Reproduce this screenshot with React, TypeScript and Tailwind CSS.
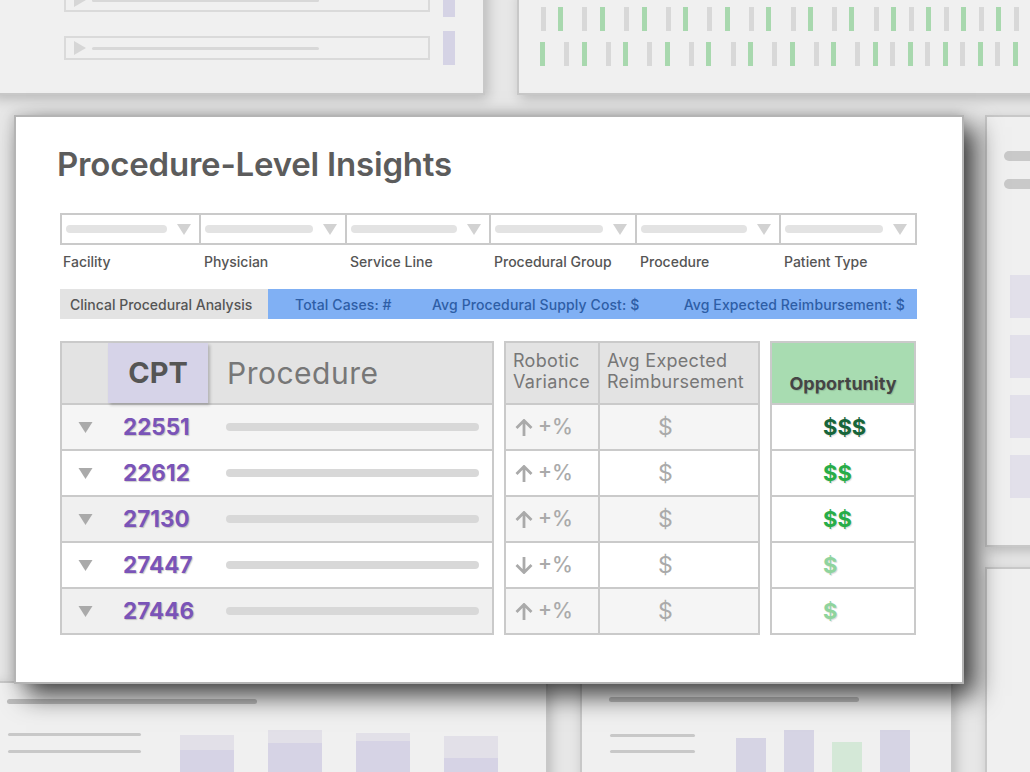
import { FC } from 'react';

const font = 'font-[family-name:Inter,"Liberation_Sans",sans-serif]';

const Caret: FC<{ className: string }> = ({ className }) => (
  <svg viewBox="0 0 14 11" className={className}>
    <path d="M0 0H14L7 11Z" fill="currentColor" />
  </svg>
);

const Arrow: FC<{ down?: boolean }> = ({ down }) => (
  <svg
    viewBox="0 0 18 17"
    className={`h-[17px] w-[18px] text-[#aaaaaa] ${down ? 'rotate-180' : ''}`}
  >
    <path
      d="M1.5 9 9 1.5 16.5 9M9 2v15"
      fill="none"
      stroke="currentColor"
      strokeWidth="2.8"
    />
  </svg>
);

const filters = [
  'Facility',
  'Physician',
  'Service Line',
  'Procedural Group',
  'Procedure',
  'Patient Type',
];

const rows = [
  { cpt: '22551', up: true, opp: '$$$', oppColor: 'text-[#17653a]', bg: 'bg-[#f5f5f5]' },
  { cpt: '22612', up: true, opp: '$$', oppColor: 'text-[#28ad48]', bg: 'bg-white' },
  { cpt: '27130', up: true, opp: '$$', oppColor: 'text-[#28ad48]', bg: 'bg-[#f0f0f0]' },
  { cpt: '27447', up: false, opp: '$', oppColor: 'text-[#8fd49d]', bg: 'bg-white' },
  { cpt: '27446', up: true, opp: '$', oppColor: 'text-[#8fd49d]', bg: 'bg-[#f0f0f0]' },
];

const ticksTop = [
  [541, 0], [558, 1], [582, 0], [600, 1], [624, 0], [642, 1], [666, 0], [683, 1],
  [707, 0], [725, 1], [749, 0], [766, 1], [791, 0], [808, 1], [832, 0], [849, 1],
  [874, 0], [891, 1], [909, 0], [926, 1], [944, 0], [961, 1], [979, 0], [996, 1], [1014, 0],
];
const ticksBottom = [
  [540, 1], [564, 0], [582, 1], [606, 0], [623, 1], [647, 0], [665, 1], [689, 0],
  [706, 1], [731, 0], [748, 1], [772, 0], [790, 1], [814, 0], [831, 1], [855, 0],
  [873, 1], [890, 0], [908, 1], [925, 0], [943, 1], [960, 0], [978, 1], [995, 0], [1013, 1],
];

// filter column widths measured off the mock (first and last absorb the outer border)
const filterCols = 'grid-cols-[137px_146px_144px_146px_144px_1fr]';

const ghostCard =
  'absolute border-2 border-[#c8c8c8] bg-[#f0f0f0] shadow-[3px_4px_12px_rgba(0,0,0,0.2)]';

const BackgroundCards: FC = () => (
  <>
    {/* top left list window */}
    <div className={`${ghostCard} left-[-10px] top-[-44px] h-[139px] w-[495px]`}>
      <div className="flex flex-col gap-[14px] pl-[72px] pt-[25px]">
        {[0, 1].map((i) => (
          <div key={i} className="flex items-center">
            <div className="flex h-[24px] w-[366px] items-center border-2 border-[#dadada] pl-[8px]">
              <svg viewBox="0 0 12 14" className="h-[14px] w-[12px]">
                <path d="M0 0 12 7 0 14Z" fill="#d6d6d6" />
              </svg>
              <div className="ml-[6px] h-[3px] w-[227px] rounded-full bg-[#d8d8d8]" />
            </div>
            <div className="ml-[13px] h-[34px] w-[12px] bg-[#d5d3e5]" />
          </div>
        ))}
      </div>
    </div>

    {/* top right tick window */}
    <div className={`${ghostCard} left-[517px] top-[-10px] h-[105px] w-[540px]`}>
      <div className="pl-[21px] pt-[15px]">
        <svg width="500" height="60" viewBox="0 0 500 60">
          {ticksTop.map(([x, g]) => (
            <rect key={`t${x}`} x={x - 540} y={0} width={5} height={24} fill={g ? '#a8d8ae' : '#d8d8d8'} />
          ))}
          {ticksBottom.map(([x, g]) => (
            <rect key={`b${x}`} x={x - 540} y={35} width={5} height={24} fill={g ? '#a8d8ae' : '#d8d8d8'} />
          ))}
        </svg>
      </div>
    </div>

    {/* right window */}
    <div className={`${ghostCard} left-[985px] top-[115px] h-[432px] w-[80px]`}>
      <div className="flex flex-col gap-[18px] pl-[17px] pt-[34px]">
        <div className="h-[10px] w-[60px] rounded-full bg-[#c9c9c9]" />
        <div className="h-[10px] w-[60px] rounded-full bg-[#c9c9c9]" />
      </div>
      <div className="mt-[86px] flex flex-col gap-[17px] pl-[23px]">
        {[0, 1, 2, 3].map((i) => (
          <div key={i} className="h-[43px] w-[60px] bg-[#e2e0ea]" />
        ))}
      </div>
    </div>
    <div className={`${ghostCard} left-[985px] top-[567px] h-[300px] w-[80px]`} />

    {/* bottom left chart window */}
    <div className={`${ghostCard} left-[-10px] top-[681px] h-[150px] w-[558px]`}>
      <div className="ml-[15px] mt-[16px] h-[5px] w-[250px] rounded-full bg-[#bdbdbd]" />
      <div className="mt-[21px] flex h-[75px] items-end pl-[16px]">
        <div className="flex flex-col gap-[14px] self-start pt-[8px]">
          <div className="h-[3px] w-[133px] rounded-full bg-[#c8c8c8]" />
          <div className="h-[3px] w-[133px] rounded-full bg-[#c8c8c8]" />
        </div>
        <div className="ml-[39px] flex items-end gap-[34px]">
          {[
            [15, 50],
            [13, 57],
            [8, 59],
            [22, 42],
          ].map(([light, dark], i) => (
            <div key={i} className="flex w-[54px] flex-col">
              <div className="bg-[#e2e0e8]" style={{ height: light }} />
              <div className="bg-[#d6d3e5]" style={{ height: dark }} />
            </div>
          ))}
        </div>
      </div>
    </div>

    {/* bottom middle chart window */}
    <div className={`${ghostCard} left-[580px] top-[681px] h-[150px] w-[373px]`}>
      <div className="ml-[27px] mt-[14px] h-[5px] w-[250px] rounded-full bg-[#bdbdbd]" />
      <div className="mt-[24px] flex h-[75px] items-end pl-[28px]">
        <div className="flex flex-col gap-[13px] self-start pt-[8px]">
          <div className="h-[3px] w-[85px] rounded-full bg-[#c8c8c8]" />
          <div className="h-[3px] w-[85px] rounded-full bg-[#c8c8c8]" />
        </div>
        <div className="ml-[41px] flex items-end gap-[18px]">
          <div className="h-[63px] w-[30px] bg-[#d6d4e4]" />
          <div className="h-[71px] w-[30px] bg-[#d6d4e4]" />
          <div className="h-[59px] w-[30px] bg-[#d4e8d7]" />
          <div className="h-[71px] w-[30px] bg-[#d6d4e4]" />
        </div>
      </div>
    </div>
  </>
);

const InsightsCard: FC = () => (
  <div className="absolute left-[14px] top-[115px] h-[569px] w-[950px] border-2 border-[#b4b4b4] bg-white pl-[44px] pt-[28px] shadow-[12px_12px_24px_rgba(0,0,0,0.72),-2px_-2px_10px_rgba(0,0,0,0.12)]">
    <h1 className="-ml-[3px] text-[33px] font-semibold leading-[39px] tracking-[-0.2px] text-[#5c5c5c]">
      Procedure-Level Insights
    </h1>

    {/* filters */}
    <div className="mt-[29px] w-[857px]">
      <div className={`grid h-[32px] ${filterCols} border-2 border-[#cacaca]`}>
        {filters.map((f, i) => (
          <div
            key={f}
            className={`flex items-center gap-[10px] pl-[4px] pr-[8px] ${i ? 'border-l-2 border-[#cacaca]' : ''}`}
          >
            <div className="h-[8px] flex-1 rounded-full bg-[#e3e3e3]" />
            <Caret className="h-[11px] w-[14px] text-[#d2d2d2]" />
          </div>
        ))}
      </div>
      <div className={`mt-[7px] grid ${filterCols} pl-[2px]`}>
        {filters.map((f, i) => (
          <div
            key={f}
            className={`${i ? 'pl-[5px]' : 'pl-[1px]'} text-[14px] font-medium leading-[20px] text-[#555555]`}
          >
            {f}
          </div>
        ))}
      </div>
    </div>

    {/* summary bar */}
    <div className="mt-[17px] flex h-[30px] w-[857px] text-[14px] font-medium">
      <div className="flex w-[208px] items-center bg-[#e3e3e3] pl-[10px] text-[#555555]">
        Clincal Procedural Analysis
      </div>
      <div className="flex flex-1 items-center justify-between bg-[#80b0f4] pl-[27px] pr-[12px] tracking-[0.12px] text-[#2e5ea6]">
        <span>Total Cases: #</span>
        <span className="-ml-[4px]">Avg Procedural Supply Cost: $</span>
        <span>Avg Expected Reimbursement: $</span>
      </div>
    </div>

    {/* tables */}
    <div className="mt-[22px] flex gap-[10px]">
      <div className="w-[434px] border-2 border-[#cacaca]">
        <div className="flex h-[62px] border-b-2 border-[#cacaca] bg-[#e3e3e3]">
          <div className="w-[46px]" />
          <div className="flex w-[100px] items-center justify-center bg-[#d6d3e8] text-[29px] font-bold text-[#555555] shadow-[2px_2px_3px_rgba(0,0,0,0.22)]">
            CPT
          </div>
          <div className="flex items-center pl-[19px] text-[30px] font-normal tracking-[0.5px] text-[#777777]">
            Procedure
          </div>
        </div>
        {rows.map((r, i) => (
          <div
            key={r.cpt}
            className={`flex items-center ${r.bg} ${i < rows.length - 1 ? 'h-[46px] border-b-2 border-[#cacaca]' : 'h-[44px]'}`}
          >
            <div className="flex w-[46px] justify-center">
              <Caret className="h-[11px] w-[15px] text-[#aaaaaa]" />
            </div>
            <div className="w-[100px] pl-[15px] text-[22.5px] font-bold text-[#7a54b8] [text-shadow:1px_1px_1px_rgba(0,0,0,0.2)]">
              {r.cpt}
            </div>
            <div className="ml-[18px] mr-[13px] h-[8px] flex-1 rounded-full bg-[#d8d8d8]" />
          </div>
        ))}
      </div>

      <div className="w-[256px] border-2 border-[#cacaca]">
        <div className="flex h-[62px] border-b-2 border-[#cacaca] bg-[#e3e3e3] text-[18px] leading-[21px] tracking-[0.3px] text-[#777777]">
          <div className="w-[94px] border-r-2 border-[#cacaca] pl-[7px] pt-[7px]">
            Robotic
            <br />
            Variance
          </div>
          <div className="flex-1 pl-[7px] pt-[7px]">
            Avg Expected
            <br />
            Reimbursement
          </div>
        </div>
        {rows.map((r, i) => (
          <div
            key={r.cpt}
            className={`flex ${i % 2 ? 'bg-white' : 'bg-[#f5f5f5]'} ${i < rows.length - 1 ? 'h-[46px] border-b-2 border-[#cacaca]' : 'h-[44px]'}`}
          >
            <div className="flex w-[94px] items-center gap-[5px] border-r-2 border-[#cacaca] pl-[9px] text-[21px] font-medium text-[#aaaaaa]">
              <Arrow down={!r.up} />
              <span>+%</span>
            </div>
            <div className="flex flex-1 items-center pl-[58px] text-[23px] text-[#aaaaaa]">$</div>
          </div>
        ))}
      </div>

      <div className="w-[146px] border-2 border-[#cacaca]">
        <div className="flex h-[62px] items-end justify-center border-b-2 border-[#cacaca] bg-[#a8dcb1] pb-[8px] text-[18px] font-bold leading-[22px] text-[#454545] [text-shadow:1px_1px_1px_rgba(0,0,0,0.15)]">
          Opportunity
        </div>
        {rows.map((r, i) => (
          <div
            key={r.cpt}
            className={`flex items-center bg-white pl-[51px] text-[22px] font-bold ${r.oppColor} [text-shadow:1px_1px_1px_rgba(0,0,0,0.15)] ${i < rows.length - 1 ? 'h-[46px] border-b-2 border-[#cacaca]' : 'h-[44px]'}`}
          >
            {r.opp}
          </div>
        ))}
      </div>
    </div>
  </div>
);

const App: FC = () => (
  <div className={`relative h-[772px] w-[1030px] overflow-hidden bg-[#e7e7e7] ${font}`}>
    <BackgroundCards />
    <InsightsCard />
  </div>
);

export default App;
